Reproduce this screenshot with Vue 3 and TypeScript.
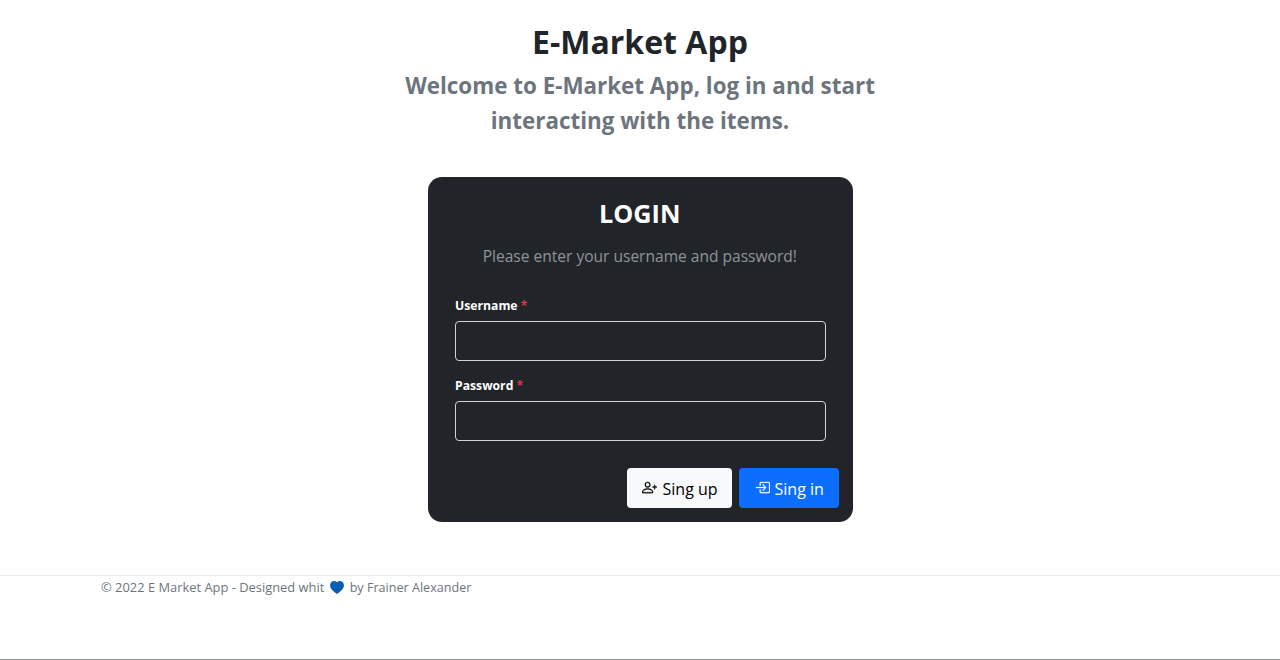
<template>
  <div class="page">
    <header class="top">
      <h1 class="title">E-Market App</h1>
      <h2 class="subtitle">Welcome to E-Market App, log in and start interacting with the items.</h2>
    </header>

    <section class="card">
      <h3 class="card-title">LOGIN</h3>
      <p class="card-text">Please enter your username and password!</p>

      <form class="form" @submit.prevent>
        <div v-for="field in fields" :key="field.name" class="field">
          <label class="label" :for="field.name">{{ field.label }} <span class="req">*</span></label>
          <input :id="field.name" class="input" :type="field.type" />
        </div>

        <div class="actions">
          <button class="btn btn-light" type="button">
            <svg class="icon" width="15" height="15" viewBox="0 0 16 16" fill="currentColor">
              <path d="M6 8a3 3 0 1 0 0-6 3 3 0 0 0 0 6zm2-3a2 2 0 1 1-4 0 2 2 0 0 1 4 0zm4 8c0 1-1 1-1 1H1s-1 0-1-1 1-4 6-4 6 3 6 4zm-1-.004c-.001-.246-.154-.986-.832-1.664C9.516 10.68 8.289 10 6 10c-2.29 0-3.516.68-4.168 1.332-.678.678-.83 1.418-.832 1.664h10z" />
              <path fill-rule="evenodd" d="M13.5 5a.5.5 0 0 1 .5.5V7h1.500a.5.5 0 0 1 0 1H14v1.500a.5.5 0 0 1-1 0V8h-1.500a.5.5 0 0 1 0-1H13V5.500a.5.5 0 0 1 .5-.5z" />
            </svg>
            Sing up
          </button>
          <button class="btn btn-primary" type="submit">
            <svg class="icon" width="15" height="15" viewBox="0 0 16 16" fill="currentColor">
              <path fill-rule="evenodd" d="M6 3.500a.5.5 0 0 1 .5-.5h8a.5.5 0 0 1 .5.5v9a.5.5 0 0 1-.5.5h-8a.5.5 0 0 1-.5-.5v-2a.5.5 0 0 0-1 0v2A1.500 1.500 0 0 0 6.500 14h8a1.500 1.500 0 0 0 1.500-1.500v-9A1.500 1.500 0 0 0 14.500 2h-8A1.500 1.500 0 0 0 5 3.500v2a.5.5 0 0 0 1 0v-2z" />
              <path fill-rule="evenodd" d="M11.854 8.354a.5.5 0 0 0 0-.708l-3-3a.5.5 0 1 0-.708.708L10.293 7.500H1.500a.5.5 0 0 0 0 1h8.793l-2.147 2.146a.5.5 0 0 0 .708.708l3-3z" />
            </svg>
            Sing in
          </button>
        </div>
      </form>
    </section>

    <footer class="footer">
      <p class="copy">
        © 2022 E Market App - Designed whit
        <svg class="heart" width="14" height="13" viewBox="0 0 16 15" fill="#0a5fb4">
          <path d="M8 15C-7.333 4.868 3.279-3.040 7.824 1.143c.06.055.119.112.176.171a3.120 3.120 0 0 1 .176-.170C12.720-3.042 23.333 4.867 8 15z" />
        </svg>
        <span class="by">by Frainer Alexander</span>
      </p>
    </footer>
    <div class="edge"></div>
  </div>
</template>

<script setup lang="ts">
interface Field {
  name: string
  label: string
  type: string
}

const fields: Field[] = [
  { name: 'username', label: 'Username', type: 'text' },
  { name: 'password', label: 'Password', type: 'password' }
]
</script>

<style>
html,
body {
  margin: 0;
  background: #fff;
}
</style>

<style scoped>
.page {
  height: 660px;
  display: flex;
  flex-direction: column;
  font-family: "Open Sans", "Liberation Sans", sans-serif;
  color: #212529;
  box-sizing: border-box;
  overflow: hidden;
}

.top {
  text-align: center;
  padding-top: 20px;
}

.title {
  margin: 0;
  font-size: 32px;
  line-height: 44px;
  font-weight: 700;
}

.subtitle {
  width: 520px;
  margin: 4px auto 0;
  font-size: 22.4px;
  line-height: 35px;
  font-weight: 700;
  color: #6c757d;
}

.card {
  width: 425px;
  height: 345px;
  margin: 39px auto 0;
  padding: 18px 14px 14px 27.5px;
  box-sizing: border-box;
  background: #212529;
  border-radius: 14px;
  color: #fff;
}

.card-title {
  margin: -1px 14px 0 0;
  text-align: center;
  font-size: 25.2px;
  line-height: 38px;
  font-weight: 700;
}

.card-text {
  margin: 12px 14px 0 0;
  text-align: center;
  font-size: 15.55px;
  line-height: 24px;
  color: #8f9499;
}

.form {
  margin-top: 28px;
  display: flex;
  flex-direction: column;
}

.field {
  width: 370.5px;
  margin-bottom: 15px;
}

.label {
  display: block;
  margin-bottom: 5px;
  font-size: 12.2px;
  line-height: 20px;
  font-weight: 700;
}

.req {
  color: #dc3545;
}

.input {
  display: block;
  width: 100%;
  height: 40px;
  box-sizing: border-box;
  background: #212529;
  border: 1px solid #ced4da;
  border-radius: 4px;
  color: #fff;
}

.actions {
  display: flex;
  justify-content: flex-end;
  gap: 7px;
  margin-top: 12px;
}

.btn {
  height: 40px;
  padding: 2px 0 0 15px;
  display: inline-flex;
  align-items: center;
  gap: 6px;
  border: none;
  border-radius: 4px;
  font-family: inherit;
  font-size: 16px;
}

.btn-light {
  width: 105px;
  background: #f8f9fa;
  color: #000;
}

.btn-primary {
  width: 100px;
  padding-left: 16px;
  gap: 5px;
  background: #0d6efd;
  color: #fff;
}

.icon {
  flex-shrink: 0;
  margin-bottom: 4px;
  stroke: currentColor;
  stroke-width: 0.3;
}

.footer {
  margin-top: 53px;
  border-top: 1px solid #e9ecef;
  padding-left: 101px;
}

.copy {
  margin: 1px 0 0;
  font-size: 12.9px;
  line-height: 20px;
  color: #6c757d;
}

.by {
  font-size: 12.6px;
}

.heart {
  margin: 0 6px 0 2px;
  vertical-align: -2px;
}

.edge {
  margin-top: auto;
  height: 1px;
  background: #8f9499;
}
</style>
